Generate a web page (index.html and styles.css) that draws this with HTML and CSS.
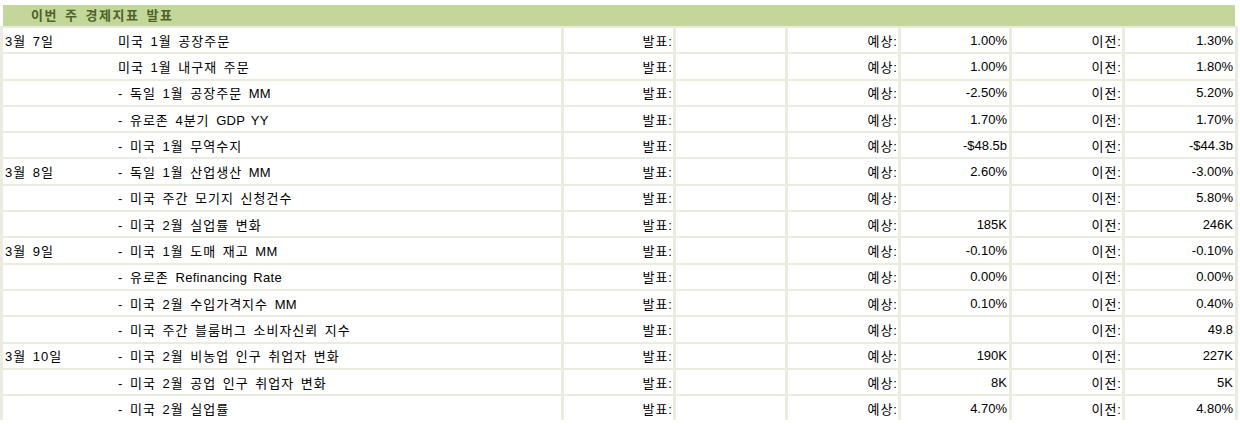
FILE: index.html
```html
<!DOCTYPE html>
<html lang="ko">
<head>
<meta charset="utf-8">
<title>이번 주 경제지표 발표</title>
<link rel="stylesheet" href="styles.css">
</head>
<body>
<div class="sheet">
  <div class="title">이번 주 경제지표 발표</div>
  <div class="table">
    <div class="row"><div class="c name"><span class="date">3월 7일</span><span class="ev">미국 1월 공장주문</span></div><div class="c r k">발표:</div><div class="c"></div><div class="c r k">예상:</div><div class="c r v">1.00%</div><div class="c r k">이전:</div><div class="c r v">1.30%</div></div>
    <div class="row"><div class="c name"><span class="date"></span><span class="ev">미국 1월 내구재 주문</span></div><div class="c r k">발표:</div><div class="c"></div><div class="c r k">예상:</div><div class="c r v">1.00%</div><div class="c r k">이전:</div><div class="c r v">1.80%</div></div>
    <div class="row"><div class="c name"><span class="date"></span><span class="ev">- 독일 1월 공장주문 <span class="lat">MM</span></span></div><div class="c r k">발표:</div><div class="c"></div><div class="c r k">예상:</div><div class="c r v">-2.50%</div><div class="c r k">이전:</div><div class="c r v">5.20%</div></div>
    <div class="row"><div class="c name"><span class="date"></span><span class="ev">- 유로존 4분기 <span class="lat">GDP YY</span></span></div><div class="c r k">발표:</div><div class="c"></div><div class="c r k">예상:</div><div class="c r v">1.70%</div><div class="c r k">이전:</div><div class="c r v">1.70%</div></div>
    <div class="row"><div class="c name"><span class="date"></span><span class="ev">- 미국 1월 무역수지</span></div><div class="c r k">발표:</div><div class="c"></div><div class="c r k">예상:</div><div class="c r v">-$48.5b</div><div class="c r k">이전:</div><div class="c r v">-$44.3b</div></div>
    <div class="row"><div class="c name"><span class="date">3월 8일</span><span class="ev">- 독일 1월 산업생산 <span class="lat">MM</span></span></div><div class="c r k">발표:</div><div class="c"></div><div class="c r k">예상:</div><div class="c r v">2.60%</div><div class="c r k">이전:</div><div class="c r v">-3.00%</div></div>
    <div class="row"><div class="c name"><span class="date"></span><span class="ev">- 미국 주간 모기지 신청건수</span></div><div class="c r k">발표:</div><div class="c"></div><div class="c r k">예상:</div><div class="c r v"></div><div class="c r k">이전:</div><div class="c r v">5.80%</div></div>
    <div class="row"><div class="c name"><span class="date"></span><span class="ev">- 미국 2월 실업률 변화</span></div><div class="c r k">발표:</div><div class="c"></div><div class="c r k">예상:</div><div class="c r v">185K</div><div class="c r k">이전:</div><div class="c r v">246K</div></div>
    <div class="row"><div class="c name"><span class="date">3월 9일</span><span class="ev">- 미국 1월 도매 재고 <span class="lat">MM</span></span></div><div class="c r k">발표:</div><div class="c"></div><div class="c r k">예상:</div><div class="c r v">-0.10%</div><div class="c r k">이전:</div><div class="c r v">-0.10%</div></div>
    <div class="row"><div class="c name"><span class="date"></span><span class="ev">- 유로존 <span class="lat">Refinancing Rate</span></span></div><div class="c r k">발표:</div><div class="c"></div><div class="c r k">예상:</div><div class="c r v">0.00%</div><div class="c r k">이전:</div><div class="c r v">0.00%</div></div>
    <div class="row"><div class="c name"><span class="date"></span><span class="ev">- 미국 2월 수입가격지수 <span class="lat">MM</span></span></div><div class="c r k">발표:</div><div class="c"></div><div class="c r k">예상:</div><div class="c r v">0.10%</div><div class="c r k">이전:</div><div class="c r v">0.40%</div></div>
    <div class="row"><div class="c name"><span class="date"></span><span class="ev">- 미국 주간 블룸버그 소비자신뢰 지수</span></div><div class="c r k">발표:</div><div class="c"></div><div class="c r k">예상:</div><div class="c r v"></div><div class="c r k">이전:</div><div class="c r v">49.8</div></div>
    <div class="row"><div class="c name"><span class="date">3월 10일</span><span class="ev">- 미국 2월 비농업 인구 취업자 변화</span></div><div class="c r k">발표:</div><div class="c"></div><div class="c r k">예상:</div><div class="c r v">190K</div><div class="c r k">이전:</div><div class="c r v">227K</div></div>
    <div class="row"><div class="c name"><span class="date"></span><span class="ev">- 미국 2월 공업 인구 취업자 변화</span></div><div class="c r k">발표:</div><div class="c"></div><div class="c r k">예상:</div><div class="c r v">8K</div><div class="c r k">이전:</div><div class="c r v">5K</div></div>
    <div class="row"><div class="c name"><span class="date"></span><span class="ev">- 미국 2월 실업률</span></div><div class="c r k">발표:</div><div class="c"></div><div class="c r k">예상:</div><div class="c r v">4.70%</div><div class="c r k">이전:</div><div class="c r v">4.80%</div></div>
  </div>
</div>
</body>
</html>
```
FILE: styles.css
```css
html, body {
  margin: 0;
  padding: 0;
  background: #ffffff;
}
body {
  font-family: "Liberation Sans", "Noto Sans CJK KR", sans-serif;
  font-size: 13px;
  color: #000000;
}
.sheet {
  padding-top: 5px;
}
.title {
  margin-left: 3px;
  width: 1232px;
  height: 21px;
  line-height: 21px;
  background: #c4d79b;
  color: #4f6228;
  font-weight: bold;
  font-size: 13px;
  letter-spacing: 1.5px;
  word-spacing: 2px;
  padding-left: 28px;
  box-sizing: border-box;
}
.table {
  width: 1238px;
  background: #ebecdf;
  padding: 2px 3px 0 3px;
  box-sizing: border-box;
  display: flex;
  flex-direction: column;
  row-gap: 2px;
}
.row {
  display: grid;
  grid-template-columns: 558px 109px 109px 110px 108px 110px 110px;
  column-gap: 3px;
  height: 24.3px;
}
.c {
  background: #ffffff;
  display: flex;
  align-items: center;
  white-space: nowrap;
  overflow: hidden;
}
.r {
  justify-content: flex-end;
  padding-right: 1px;
}
.k {
  letter-spacing: 1px;
  padding-right: 0;
}
.v {
  padding-right: 2px;
}
.name {
  letter-spacing: 1px;
  word-spacing: 2px;
}
.date {
  width: 112px;
  padding-left: 2px;
  box-sizing: border-box;
  flex: none;
}
.ev {
  padding-left: 3px;
}
.lat {
  letter-spacing: 0.3px;
}
```
